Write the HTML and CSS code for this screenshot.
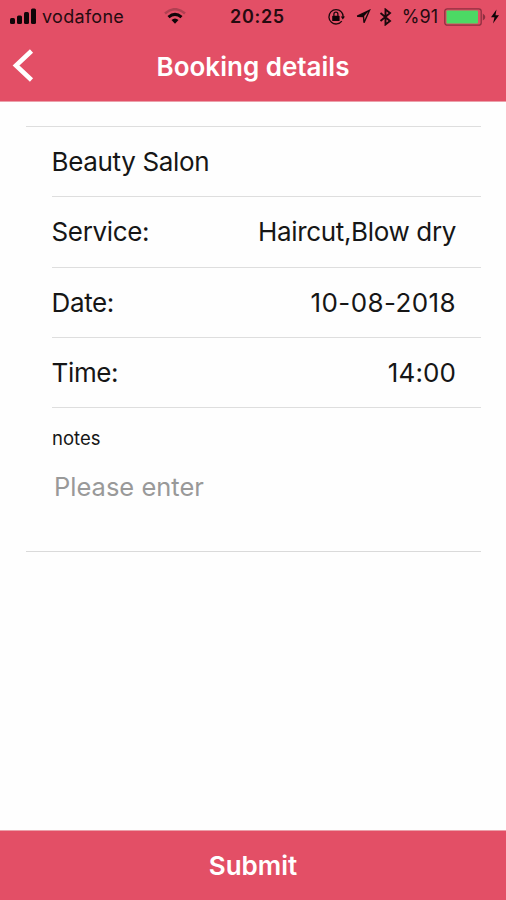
FILE: index.html
```
<!DOCTYPE html>
<html lang="en">
<head>
  <meta charset="UTF-8">
  <meta name="viewport" content="width=device-width, initial-scale=1.0">
  <title>Booking details</title>
  <link rel="stylesheet" href="styles.css">
</head>
<body>
  <header class="header">
    <div class="status-bar">
      <div class="status-left">
        <svg class="signal" width="27" height="17" viewBox="0 0 27 17">
          <rect x="0" y="10" width="5" height="6" rx="1.5"/>
          <rect x="7" y="7.5" width="5" height="8.5" rx="1.5"/>
          <rect x="14" y="4" width="5" height="12" rx="1.5"/>
          <rect x="21" y="0.5" width="5" height="15.5" rx="1.5"/>
        </svg>
        <span class="carrier">vodafone</span>
        <svg class="wifi" width="22" height="17" viewBox="0 0 22 17">
          <path d="M1 5.5Q11 -3 21 5.5" fill="none" stroke="#b04052" stroke-width="2.6"/>
          <path d="M4.5 9.2Q11 3.5 17.5 9.2" fill="none" stroke="#100508" stroke-width="3"/>
          <path d="M7.5 12Q11 9 14.5 12L11 15.8Z"/>
        </svg>
      </div>
      <span class="clock">20:25</span>
      <div class="status-right">
        <svg class="lock" width="18" height="18" viewBox="0 0 18 18">
          <path d="M14.3 3.8A7.2 7.2 0 1 0 14.8 13.2" fill="none" stroke="#1c080c" stroke-width="1.3"/>
          <path d="M14.3 3.8Q16.3 6 16.2 9" fill="none" stroke="#1c080c" stroke-width="1.3"/>
          <path d="M13.8 8.5H18L15.8 11.5Z"/>
          <rect x="5.2" y="7.8" width="7.4" height="5.2" rx="0.6"/>
          <path d="M6.9 8V6.2a2 2 0 0 1 4 0V8" fill="none" stroke="#1c080c" stroke-width="1.3"/>
        </svg>
        <svg class="location" width="15" height="15" viewBox="0 0 15 15">
          <path d="M1.2 7.2L13.5 1.3L8 13.7L7.5 7.5Z" fill="none" stroke="#1c080c" stroke-width="1.4"/>
          <path d="M1.2 7.2L13.5 1.3L7.5 7.8Z"/>
        </svg>
        <svg class="bluetooth" width="13" height="18" viewBox="0 0 13 18">
          <path d="M1.5 5L11 13L6.5 16.5V1.5L11 5L1.5 13" fill="none" stroke="#1c080c" stroke-width="1.9"/>
        </svg>
        <span class="battery-text">%91</span>
        <svg class="battery" width="42" height="18" viewBox="0 0 42 18">
          <rect x="0.8" y="0.8" width="36.4" height="16.4" rx="2.5" fill="none" stroke="#8e2f40" stroke-width="1.3"/>
          <rect x="2.5" y="2.5" width="31.5" height="13" rx="0.8" fill="#4cd964"/>
          <path d="M38.8 5.5Q41.3 7 41.3 9T38.8 12.5Z" fill="#8e2f40"/>
        </svg>
        <svg class="bolt" width="10" height="15" viewBox="0 0 10 15">
          <path d="M6.5 0.5L1 8.3H4.5L3 14.5L9 6.2H5.5Z"/>
        </svg>
      </div>
    </div>
    <div class="nav-bar">
      <button class="back" aria-label="Back">
        <svg width="22" height="34" viewBox="0 0 22 34">
          <path d="M19.5 2L4 16.5L19.5 31" fill="none" stroke="#fff" stroke-width="4.6"/>
        </svg>
      </button>
      <h1>Booking details</h1>
    </div>
  </header>

  <main class="booking">
    <div class="row">
      <span>Beauty Salon</span>
    </div>
    <div class="row">
      <span>Service:</span>
      <span>Haircut,Blow dry</span>
    </div>
    <div class="row">
      <span>Date:</span>
      <span class="date">10-08-2018</span>
    </div>
    <div class="row">
      <span>Time:</span>
      <span class="time">14:00</span>
    </div>
    <div class="notes">
      <label for="notes">notes</label>
      <input type="text" id="notes" placeholder="Please enter">
    </div>
  </main>

  <button class="submit">Submit</button>
</body>
</html>
```
FILE: styles.css
```
* {
  box-sizing: border-box;
}
body {
  display: flex;
  flex-direction: column;
  height: 900px;
  margin: 0;
  background-color: #fefefe;
  color: #161616;
  font-family: Inter, "Liberation Sans", sans-serif;
}
svg {
  display: block;
  flex: none;
  fill: #100508;
}
button {
  border: none;
  padding: 0;
  background: none;
  color: #fff;
  font-family: inherit;
  cursor: pointer;
}
.header {
  height: 102px;
  background-color: #e34f66;
  border-bottom: 1px solid #eba0aa;
}
.status-bar {
  display: grid;
  grid-template-columns: 1fr 56px 1fr;
  align-items: center;
  height: 33px;
  padding: 0 6px 0 10px;
  color: #250b10;
}
.status-left,
.status-right {
  display: flex;
  align-items: center;
}
.status-right {
  justify-content: flex-end;
}
.carrier {
  margin-left: 5px;
  font-size: 18px;
  letter-spacing: 0.3px;
}
.wifi {
  margin-left: 40px;
}
.clock {
  padding-left: 3px;
  font-size: 18px;
  font-weight: 600;
  letter-spacing: 0.7px;
  white-space: nowrap;
}
.location {
  margin-left: 11px;
}
.bluetooth {
  margin-left: 8px;
}
.battery-text {
  margin-left: 10px;
  font-size: 18px;
}
.battery {
  margin-left: 6px;
}
.bolt {
  margin-left: 4px;
}
.nav-bar {
  display: grid;
  grid-template-columns: 60px 1fr 60px;
  align-items: center;
  height: 66px;
}
.back {
  padding-left: 12px;
}
h1 {
  margin: 0;
  color: #fff;
  font-size: 26px;
  font-weight: 600;
  text-align: center;
}
.booking {
  flex: 1;
  margin: 24px 25px 0 26px;
}
.booking::before {
  content: "";
  display: block;
  border-top: 1px solid #dedede;
}
.row {
  display: flex;
  justify-content: space-between;
  align-items: center;
  height: 70.3px;
  margin-left: 25.5px;
  padding-right: 25px;
  border-bottom: 1px solid #dedede;
  font-size: 26px;
  letter-spacing: -0.35px;
}
.row .date {
  letter-spacing: 0.4px;
}
.row .time {
  letter-spacing: 0.1px;
}
.notes {
  height: 144px;
  padding: 18px 26px 0;
  border-bottom: 1px solid #dadada;
}
.notes label {
  display: block;
  font-size: 18.5px;
  line-height: 24px;
}
.notes input {
  display: block;
  width: 100%;
  height: 40px;
  margin-top: 16px;
  padding: 0 2px;
  border: none;
  outline: none;
  background: none;
  font-family: inherit;
  font-size: 25.5px;
}
.notes input::placeholder {
  color: #999;
}
.submit {
  height: 70px;
  border-top: 1px solid #eba0aa;
  background-color: #e34f66;
  font-size: 26px;
  font-weight: 600;
}
```
